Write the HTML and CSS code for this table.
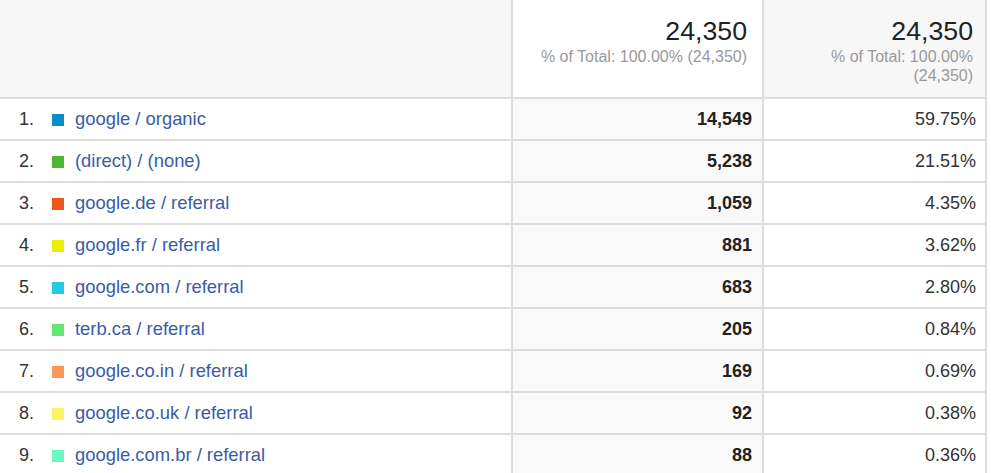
FILE: index.html
```html
<!DOCTYPE html>
<html>
<head>
<meta charset="utf-8">
<link rel="stylesheet" href="styles.css">
</head>
<body>
<div class="report">
  <div class="cell head head-dim"></div>
  <div class="cell head head-metric sorted">
    <div class="total">24,350</div>
    <div class="pct">% of Total: 100.00% (24,350)</div>
  </div>
  <div class="cell head head-metric head-dim narrow">
    <div class="total">24,350</div>
    <div class="pct">% of Total: 100.00% (24,350)</div>
  </div>

  <div class="cell dim"><span class="idx">1.</span><span class="sw c1"></span><a class="lbl">google / organic</a></div>
  <div class="cell num sorted">14,549</div>
  <div class="cell num pctcell">59.75%</div>

  <div class="cell dim"><span class="idx">2.</span><span class="sw c2"></span><a class="lbl">(direct) / (none)</a></div>
  <div class="cell num sorted">5,238</div>
  <div class="cell num pctcell">21.51%</div>

  <div class="cell dim"><span class="idx">3.</span><span class="sw c3"></span><a class="lbl">google.de / referral</a></div>
  <div class="cell num sorted">1,059</div>
  <div class="cell num pctcell">4.35%</div>

  <div class="cell dim"><span class="idx">4.</span><span class="sw c4"></span><a class="lbl">google.fr / referral</a></div>
  <div class="cell num sorted">881</div>
  <div class="cell num pctcell">3.62%</div>

  <div class="cell dim"><span class="idx">5.</span><span class="sw c5"></span><a class="lbl">google.com / referral</a></div>
  <div class="cell num sorted">683</div>
  <div class="cell num pctcell">2.80%</div>

  <div class="cell dim"><span class="idx">6.</span><span class="sw c6"></span><a class="lbl">terb.ca / referral</a></div>
  <div class="cell num sorted">205</div>
  <div class="cell num pctcell">0.84%</div>

  <div class="cell dim"><span class="idx">7.</span><span class="sw c7"></span><a class="lbl">google.co.in / referral</a></div>
  <div class="cell num sorted">169</div>
  <div class="cell num pctcell">0.69%</div>

  <div class="cell dim"><span class="idx">8.</span><span class="sw c8"></span><a class="lbl">google.co.uk / referral</a></div>
  <div class="cell num sorted">92</div>
  <div class="cell num pctcell">0.38%</div>

  <div class="cell dim"><span class="idx">9.</span><span class="sw c9"></span><a class="lbl">google.com.br / referral</a></div>
  <div class="cell num sorted">88</div>
  <div class="cell num pctcell">0.36%</div>
</div>
</body>
</html>
```

FILE: styles.css
```css
html, body {
  margin: 0;
  padding: 0;
  background: #ffffff;
}
body {
  font-family: "Liberation Sans", Arial, sans-serif;
  color: #222222;
  overflow: hidden;
}
.report {
  display: grid;
  grid-template-columns: 513px 251px 223px;
  width: 987px;
}
.cell {
  box-sizing: border-box;
  border-right: 2px solid #dddddd;
  border-bottom: 2px solid #dddddd;
}
.head {
  height: 99px;
  background: #f7f7f7;
}
.head-metric {
  text-align: right;
  padding: 16px 15px 0 10px;
}
.head-metric.sorted {
  background: #ffffff;
}
.head-metric.narrow {
  padding-right: 12px;
  padding-left: 14px;
}
.total {
  font-size: 26.7px;
  line-height: 30px;
  color: #222222;
}
.pct {
  font-size: 16px;
  line-height: 19px;
  margin-top: 1px;
  color: #999999;
}
.dim {
  height: 42px;
  display: flex;
  align-items: center;
  padding-left: 19px;
  font-size: 18px;
  line-height: 40px;
}
.idx {
  width: 33px;
  color: #333333;
}
.sw {
  width: 12px;
  height: 12px;
  margin-right: 11px;
  margin-top: 1px;
}
.lbl {
  color: #3a5ca5;
  text-decoration: none;
  font-size: 18.4px;
}
.num {
  height: 42px;
  font-size: 18px;
  line-height: 40px;
  text-align: right;
  padding-right: 10px;
  color: #222222;
}
.num.sorted {
  background: #f9f9f9;
  font-weight: bold;
}
.num.pctcell {
  padding-right: 9px;
  color: #333333;
}
.c1 { background: #058dc7; }
.c2 { background: #50b432; }
.c3 { background: #ed561b; }
.c4 { background: #edef00; }
.c5 { background: #24cbe5; }
.c6 { background: #64e572; }
.c7 { background: #ff9655; }
.c8 { background: #fff263; }
.c9 { background: #6af9c4; }
```
